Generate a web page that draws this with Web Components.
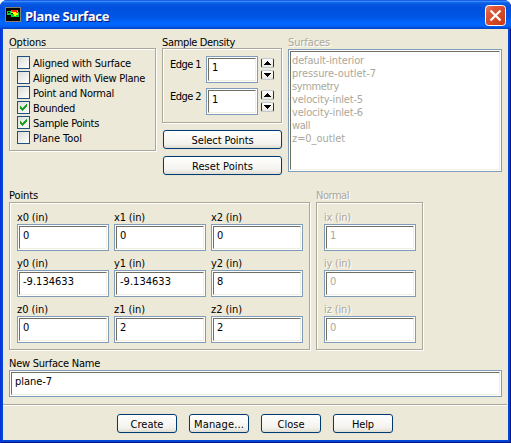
<!DOCTYPE html>
<html lang="en"><head><meta charset="utf-8"><title>Plane Surface</title>
<style>
html,body{margin:0;width:511px;height:443px;overflow:hidden;background:#fff}
body{font:11px/13px "DejaVu Sans Condensed","DejaVu Sans",sans-serif;color:#000}
</style></head><body>
<plane-dialog></plane-dialog>
<script>
const define=(name,css,html,setup)=>customElements.define(name,class extends HTMLElement{
  connectedCallback(){
    if(this.shadowRoot)return;
    this.attachShadow({mode:'open'}).innerHTML='<style>*{box-sizing:border-box}:host{display:block;box-sizing:border-box}'+css+'</style>'+(typeof html==='function'?html(this):html);
    if(setup)setup(this,this.shadowRoot);
  }
});
const at=(e,n,d='')=>e.getAttribute(n)??d;

/* Text run whose tracking is adjusted to a given width */
define('ui-text',':host{white-space:pre;height:13px;flex:none}:host([off]){color:#aca899;text-shadow:1px 1px #fff}:host([flat]){text-shadow:none}span{display:inline-block}',
 e=>`<span>${at(e,'t')}</span>`,
 (e,r)=>{const w=+at(e,'w',0),s=r.querySelector('span');if(!w)return;
  e.style.width=w+'px';
  const n=at(e,'t').length;if(n<2)return;
  s.style.letterSpacing=((w-s.getBoundingClientRect().width)/n)+'px';});

define('ui-group',':host{display:flex;flex-direction:column}.b{flex:1;border:1px solid #aca899;box-shadow:inset 1px 1px #fff,1px 1px #fff;margin:var(--gap,-1px) 1px 1px 0;padding:7px 0 0 7px}',
 e=>`<ui-text t="${at(e,'label')}" w="${at(e,'lw')}" ${e.hasAttribute('off')?'off':''}></ui-text><div class="b"><slot></slot></div>`);

define('ui-check',':host{display:flex;height:15px;gap:3px}ui-text{margin-top:1px}.c{width:13px;height:13px;border:1px solid #1c5180;background:linear-gradient(135deg,#dcdcd7,#fff);flex:none}svg{display:block}',
 e=>`<div class="c">${e.hasAttribute('on')?'<svg width="11" height="11" shape-rendering="crispEdges"><path fill="#21a121" d="M2 4h1v1h1v1h1v-1h1v-1h1v-1h1v-1h1v3h-1v1h-1v1h-1v1h-1v1h-1v-1h-1v-1h-1z"/></svg>':''}</div><ui-text t="${at(e,'t')}" w="${at(e,'w')}"></ui-text>`);

define('ui-field',':host{height:27px;border:1px solid #7f9db9;background:#fff;padding:1px;flex:none}.i{height:100%;border:1px solid;border-color:#716f64 #f1efe2 #f1efe2 #716f64;padding:2px 0 0 var(--px,3px)}',
 e=>'<div class="i"><slot></slot></div>');

define('ui-labeled',':host{width:92px;height:40px;flex:none}',
 e=>{const o=e.hasAttribute('off')?'off':'';return `<ui-text t="${at(e,'label')}" w="${at(e,'lw')}" ${o}></ui-text><ui-field><ui-text t="${at(e,'v')}" w="${at(e,'vw')}" ${o} flat></ui-text></ui-field>`});

define('ui-button',':host{display:flex;justify-content:center;height:19px;border:1px solid #003c74;border-radius:3px;background:linear-gradient(#fff,#f3f2ed 75%,#dfdcd2);padding-top:3px;box-shadow:0 0 0 1px #e7e4d7}',
 e=>`<ui-text t="${at(e,'t')}" w="${at(e,'w')}"></ui-text>`);

define('ui-spin',':host{display:grid;gap:2px;width:13px}div{height:10px;border:1px solid #003c74;border-top-color:#c0cad2;border-bottom-color:#c0cad2;border-radius:2px;background:linear-gradient(#fff,#e8e6dc)}svg{display:block}',
 '<div><svg width="11" height="8" shape-rendering="crispEdges"><path d="M5 2h1v1h1v1h1v1h1v1H2V5h1V4h1V3h1z"/></svg></div><div><svg width="11" height="8" shape-rendering="crispEdges"><path d="M2 2h7v1H8v1H7v1H6v1H5V5H4V4H3V3H2z"/></svg></div>');

define('ui-edge',':host{display:flex;height:32px}ui-text{margin-top:2px}ui-field{width:52px;margin-left:5px}ui-field ui-text{margin-top:0}ui-spin{margin:2px 0 0 3px;height:22px}',
 e=>`<ui-text t="${at(e,'t')}" w="31"></ui-text><ui-field><ui-text t="1"></ui-text></ui-field><ui-spin></ui-spin>`);

define('title-bar',':host{display:flex;height:29px;align-items:flex-start;padding:5px 5px 0;background:linear-gradient(#0831d9 0,#3d95ff 4%,#0a5ce5 10%,#0050dd 25%,#0054e3 55%,#0066ff 80%,#0062f7 90%,#0040c0 100%)}ui-text{font:bold 13px/16px "Trebuchet MS","Open Sans",sans-serif;color:#fff;text-shadow:1px 1px #0a1883;margin:3px 0 0 4px}.x{margin-left:auto}svg{display:block}.i{margin-top:2px}',
 `<svg class="i" width="16" height="15" shape-rendering="crispEdges"><path fill="#85806f" d="M0 0h16v15H0z"/><path d="M1 1h14v13H1z"/><path fill="#00d83a" d="M2 4h4v-1h7v2h1v5H6V8H2z"/><path fill="#ff0" d="M7 4h6v4h-2v1H9V7H6V5h1z"/><path fill="#f20" d="M7 3h5v2h1v1h-2V5H7z"/><path d="M3 5h2v1H3zM6 6h2v1H6z"/></svg><ui-text t="Plane Surface" w="84"></ui-text>
 <svg class="x" width="21" height="21"><defs><linearGradient id="g" x2="1" y2="1"><stop stop-color="#e88a6e"/><stop offset=".25" stop-color="#e0573a"/><stop offset="1" stop-color="#c83610"/></linearGradient></defs><rect x=".5" y=".5" width="20" height="20" rx="3" fill="url(#g)" stroke="#fff"/><path d="M5.5 5.5l10 10M15.5 5.5l-10 10" stroke="#fff" stroke-width="2.2"/></svg>`);

define('plane-dialog',`:host{width:511px;height:443px;border-radius:7px 7px 0 0;overflow:hidden;background:#0046d5}
.body{margin:0 3px;height:411px;background:#ece9d8;padding:7px 0 0 6px}
.win{height:443px;box-shadow:inset 1px 0 #0831d9,inset -1px 0 #00138c,inset 0 -1px #00138c}
.top{display:flex;height:140px}.mid{padding:0 0 0 6px;width:125px}.mid ui-group{height:88px;width:121px;margin-left:-1px}
.list{width:214px;margin-left:6px}.list ui-field{height:123px;--px:1px}
.pts{display:flex;gap:5px;height:162px;margin-top:13px;--gap:0px}
.grid{display:grid;grid-template-columns:repeat(3,92px);gap:6px 5px;margin-top:1px}
.sep{height:2px;border-top:1px solid #aca899;background:#fff;margin:7px 1px 0 -6px}
.foot{display:flex;gap:12px;margin:8px 0 0 108px}.foot ui-button{width:60px}`,
()=>{
 const row=(a,w,off)=>a.map(([l,v,vw])=>`<ui-labeled label="${l} (in)" lw="${w}" v="${v}" vw="${vw||''}" ${off}></ui-labeled>`).join('');
 const list=[['default-interior',72],['pressure-outlet-7',84],['symmetry',47],['velocity-inlet-5',71],['velocity-inlet-6',71],['wall',18],['z=0_outlet',53]];
 return `<div class="win"><title-bar></title-bar><div class="body">
 <div class="top">
  <ui-group label="Options" lw="37" style="width:148px;height:116px">
   <ui-check t="Aligned with Surface" w="98"></ui-check><ui-check t="Aligned with View Plane" w="112"></ui-check><ui-check t="Point and Normal" w="81"></ui-check><ui-check on t="Bounded" w="42"></ui-check><ui-check on t="Sample Points" w="66"></ui-check><ui-check t="Plane Tool" w="49"></ui-check>
  </ui-group>
  <div class="mid"><ui-group label="Sample Density" lw="73"><ui-edge t="Edge 1"></ui-edge><ui-edge t="Edge 2"></ui-edge></ui-group>
   <ui-button t="Select Points" w="62" style="margin-top:6px"></ui-button><ui-button t="Reset Points" w="61" style="margin-top:7px"></ui-button></div>
  <div class="list"><ui-text class="t" off t="Surfaces" w="42"></ui-text><ui-field><div class="rows">${list.map(([t,w])=>`<ui-text off flat t="${t}" w="${w}"></ui-text>`).join('')}</div></ui-field></div>
 </div>
 <div class="pts">
  <ui-group label="Points" lw="29" style="width:302px"><div class="grid">${row([['x0',0],['x1',0],['x2',0],['y0','-9.134633',51],['y1','-9.134633',51],['y2',8],['z0',0],['z1',2],['z2',2]],31,'')}</div></ui-group>
  <ui-group off label="Normal" lw="33" style="width:108px"><div class="grid" style="grid-template-columns:92px">${row([['ix',1],['iy',0],['iz',0]],27,'off')}</div></ui-group>
 </div>
 <ui-text t="New Surface Name" w="91" style="margin-top:6px"></ui-text>
 <ui-field style="width:493px"><ui-text t="plane-7" w="37"></ui-text></ui-field>
 <div class="sep"></div>
 <div class="foot"><ui-button t="Create" w="33"></ui-button><ui-button t="Manage..." w="50"></ui-button><ui-button t="Close" w="27"></ui-button><ui-button t="Help" w="22"></ui-button></div>
 </div></div>`});
</script></body></html>
